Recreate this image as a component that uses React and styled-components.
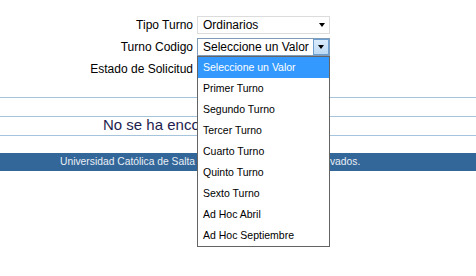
import styled, { createGlobalStyle } from "styled-components";

const GlobalStyle = createGlobalStyle`
  body {
    margin: 0;
    background: #fff;
    font-family: "Liberation Sans", Arial, sans-serif;
  }
`;

const Page = styled.div`
  position: relative;
  width: 476px;
  height: 276px;
  overflow: hidden;
`;

const Form = styled.div`
  padding-top: 16px;
  display: grid;
  grid-template-columns: 193px 133px;
  column-gap: 4px;
  row-gap: 4px;
  grid-auto-rows: 18px;
`;

const Label = styled.div`
  font-size: 12px;
  color: #000;
  text-align: right;
  line-height: 18px;
`;

const Select = styled.div`
  position: relative;
  box-sizing: border-box;
  height: 18px;
  border: 1px solid ${(p) => (p.$focused ? "#7f9db9" : "#dcdcdc")};
  background: #fff;
  font-size: 12px;
  line-height: 16px;
  padding-left: 5px;
  color: #000;
  display: flex;
  align-items: center;
  justify-content: space-between;
`;

const Arrow = styled.span`
  width: 0;
  height: 0;
  border-left: 3.5px solid transparent;
  border-right: 3.5px solid transparent;
  border-top: 4px solid #000;
`;

const PlainArrow = styled.span`
  display: flex;
  width: 14px;
  justify-content: center;
`;

const ArrowButton = styled.span`
  box-sizing: border-box;
  width: 16px;
  height: 16px;
  display: flex;
  align-items: center;
  justify-content: center;
  background: linear-gradient(#d9ebfb, #bcdaf4);
  border: 1px solid #6e9fd0;
`;

const Results = styled.div`
  margin-top: 19px;
`;

const Row = styled.div`
  height: ${(p) => (p.$last ? "17px" : "18px")};
  border-top: 1px solid #a6c4dc;
  font-size: 15px;
  color: #1e1d4e;
  line-height: 16px;
  padding-left: 103px;
  white-space: nowrap;
`;

const Footer = styled.div`
  height: 18px;
  background: #336699;
  color: #e9eff6;
  font-size: 10.3px;
  line-height: 18px;
  padding-left: 60px;
  white-space: nowrap;
`;

const Dropdown = styled.ul`
  position: absolute;
  top: 56px;
  left: 197px;
  width: 133px;
  box-sizing: border-box;
  margin: 0;
  padding: 0;
  list-style: none;
  background: #fff;
  border: 1px solid #646464;
`;

const Option = styled.li`
  height: 21px;
  line-height: 21px;
  padding-left: 5px;
  font-size: 10.5px;
  color: ${(p) => (p.$active ? "#fff" : "#000")};
  background: ${(p) => (p.$active ? "#3399ff" : "transparent")};
`;

const options = [
  "Seleccione un Valor",
  "Primer Turno",
  "Segundo Turno",
  "Tercer Turno",
  "Cuarto Turno",
  "Quinto Turno",
  "Sexto Turno",
  "Ad Hoc Abril",
  "Ad Hoc Septiembre",
];

const App = () => {
  return (
    <Page>
      <GlobalStyle />
      <Form>
        <Label>Tipo Turno</Label>
        <Select>
          Ordinarios
          <PlainArrow>
            <Arrow />
          </PlainArrow>
        </Select>
        <Label>Turno Codigo</Label>
        <Select $focused>
          Seleccione un Valor
          <ArrowButton>
            <Arrow />
          </ArrowButton>
        </Select>
        <Label>Estado de Solicitud</Label>
        <Select>Todos</Select>
      </Form>
      <Results>
        <Row />
        <Row>No se ha encontrado resultados</Row>
        <Row $last />
      </Results>
      <Footer>Universidad Católica de Salta (C) Todos los derechos reservados.</Footer>
      <Dropdown>
        {options.map((o, i) => (
          <Option key={o} $active={i === 0}>
            {o}
          </Option>
        ))}
      </Dropdown>
    </Page>
  );
};

export default App;
